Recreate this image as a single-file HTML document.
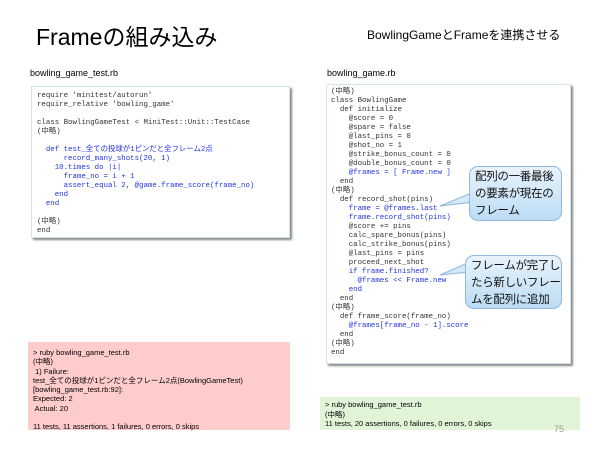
<!DOCTYPE html>
<html><head><meta charset="utf-8"><style>
*{margin:0;padding:0;box-sizing:border-box}
body{width:600px;height:450px;background:#fff;position:relative;overflow:hidden;font-family:"Liberation Sans","Noto Sans CJK JP",sans-serif;color:#000}
.a{position:absolute;white-space:pre}
.code{position:absolute;background:#fff;border:1px solid #cfe3f0;box-shadow:2px 2px 2px #888;font-family:"Liberation Mono","Noto Sans CJK JP",monospace;font-size:7.4px;line-height:9px;white-space:pre;color:#333}
.b{color:#2233dd}
.call{position:absolute;background:linear-gradient(#e8f3fc,#bcdcf3);border:1px solid #8fb8dc;border-radius:9px;font-size:11.5px;line-height:17px;padding:2px 3px 0 5px;color:#111;white-space:nowrap;letter-spacing:-0.3px}
.box{position:absolute;font-size:7.5px;line-height:9.3px;padding:6px 5px;white-space:pre}
</style></head><body>
<div class="a" style="left:36px;top:18px;font-size:23px">Frameの組み込み</div>
<div class="a" style="left:367px;top:26px;font-size:12px">BowlingGameとFrameを連携させる</div>
<div class="a" style="left:30px;top:68px;font-size:9px">bowling_game_test.rb</div>
<div class="a" style="left:327px;top:68px;font-size:9px">bowling_game.rb</div>
<div class="code" style="left:31px;top:86px;width:259px;height:152px;padding:5px 0 0 5px">require 'minitest/autorun'
require_relative 'bowling_game'

class BowlingGameTest &lt; MiniTest::Unit::TestCase
(中略)

<span class="b">  def test_全ての投球が1ピンだと全フレーム2点
      record_many_shots(20, 1)
    10.times do |i|
      frame_no = i + 1
      assert_equal 2, @game.frame_score(frame_no)
    end
  end</span>

(中略)
end</div>
<div class="code" style="left:326px;top:84px;width:245px;height:280px;padding:3px 0 0 4px">(中略)
class BowlingGame
  def initialize
    @score = 0
    @spare = false
    @last_pins = 0
    @shot_no = 1
    @strike_bonus_count = 0
    @double_bonus_count = 0
<span class="b">    @frames = [ Frame.new ]</span>
  end
(中略)
  def record_shot(pins)
<span class="b">    frame = @frames.last
    frame.record_shot(pins)</span>
    @score += pins
    calc_spare_bonus(pins)
    calc_strike_bonus(pins)
    @last_pins = pins
    proceed_next_shot
<span class="b">    if frame.finished?
      @frames &lt;&lt; Frame.new
    end</span>
  end
(中略)
  def frame_score(frame_no)
<span class="b">    @frames[frame_no - 1].score</span>
  end
(中略)
end</div>
<svg style="position:absolute;left:0;top:0" width="600" height="450">
<path d="M440,206 L474,192 L474,202 Z" fill="#d3e8f8" stroke="#8fb8dc"/>
<path d="M440,275 L470,262 L470,272 Z" fill="#d3e8f8" stroke="#8fb8dc"/>
</svg>
<div class="call" style="left:469px;top:166px;width:93px;height:55px">配列の一番最後<br>の要素が現在の<br>フレーム</div>
<div class="call" style="left:465px;top:255px;width:97px;height:54px">フレームが完了し<br>たら新しいフレー<br>ムを配列に追加</div>
<div class="box" style="left:28px;top:342px;width:262px;height:88px;background:#ffcccc">&gt; ruby bowling_game_test.rb
(中略)
 1) Failure:
test_全ての投球が1ピンだと全フレーム2点(BowlingGameTest)
[bowling_game_test.rb:92]:
Expected: 2
 Actual: 20

11 tests, 11 assertions, 1 failures, 0 errors, 0 skips</div>
<div class="box" style="left:320px;top:397px;width:260px;height:33px;background:#e0f5d8;padding-top:3px;line-height:9.5px">&gt; ruby bowling_game_test.rb
(中略)
11 tests, 20 assertions, 0 failures, 0 errors, 0 skips</div>
<div class="a" style="left:554px;top:424px;font-size:9px;color:#999">75</div>
</body></html>
